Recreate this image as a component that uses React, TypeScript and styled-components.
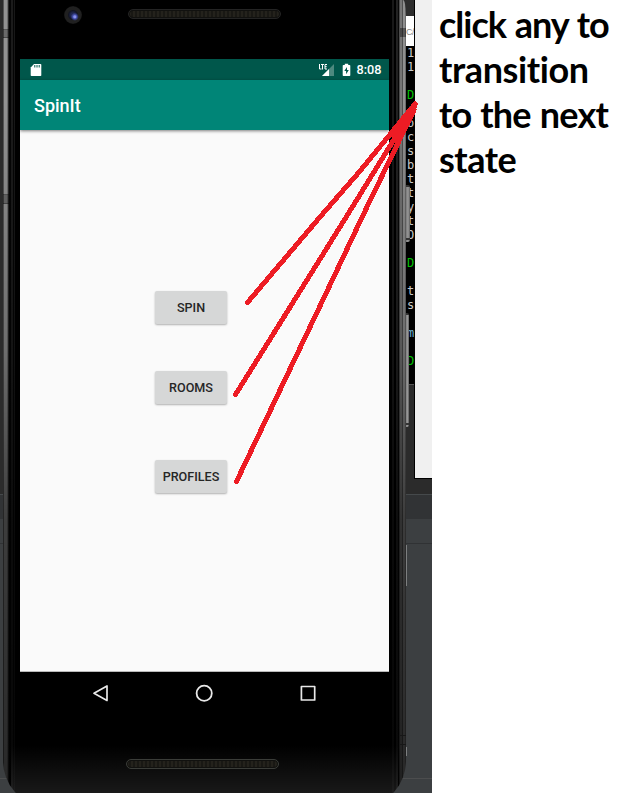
import React from "react";
import styled, { createGlobalStyle } from "styled-components";

const GlobalStyle = createGlobalStyle`
  * { box-sizing: border-box; }
  body { margin: 0; background: #fff; overflow: hidden; }
`;

const Page = styled.main`
  display: flex;
  position: relative;
  width: 624px;
  height: 793px;
  background: #fff;
  overflow: hidden;
`;

const Desktop = styled.section`
  position: relative;
  width: 432px;
  height: 793px;
  flex: none;
  overflow: hidden;
  background: linear-gradient(
    #2b2b2b 0 494px, #45494b 494px 495px, #313335 495px 519px, #3c3f41 519px 543px,
    #303234 543px 544px, #3c3f41 544px 778px, #4c4d4e 778px 779px, #3c3f41 779px
  );
`;

const Console = styled.div`
  position: absolute;
  left: 400px;
  top: 0;
  width: 15px;
  height: 479px;
  overflow: hidden;
  border-right: 1px solid #000;
  background: linear-gradient(#2d2d2d 0 16px, #fff 16px 46px, #000 46px 384px, #555 384px 385px, #2b2b2b 385px);
`;

const CodeLine = styled.div<{ $color?: string }>`
  height: 14px;
  padding-left: 7px;
  font: 12px/15px "DejaVu Sans Mono", monospace;
  color: ${(p) => p.$color ?? "#c8c8c8"};
  white-space: pre;
`;

const CodeTab = styled.div`
  height: 46px;
  padding: 25px 0 0 6px;
  font: 9px/14px "Liberation Sans", sans-serif;
  letter-spacing: -0.6px;
  color: #888;
`;

const SidePanel = styled.div`
  position: absolute;
  left: 415px;
  top: 0;
  width: 17px;
  height: 479px;
  background: #f0f0f0;
  border-bottom: 1px solid #000;
`;

const EdgeMark = styled.div<{ $top: number; $height: number }>`
  position: absolute;
  left: 406px;
  top: ${(p) => p.$top}px;
  width: 1px;
  height: ${(p) => p.$height}px;
  background: #7d7f80;
`;

const SideKey = styled.div<{ $top: number; $height: number; $width: number }>`
  position: absolute;
  left: 405px;
  top: ${(p) => p.$top}px;
  width: ${(p) => p.$width}px;
  height: ${(p) => p.$height}px;
  border-radius: 0 2px 2px 0;
  background: linear-gradient(#333 0 2px, transparent 2px calc(100% - 4px), #333 calc(100% - 4px) calc(100% - 2px), transparent calc(100% - 2px)),
    linear-gradient(90deg, #666, #9a9a9a 60%, #5c5c5c);
`;

const Phone = styled.div`
  position: relative;
  display: flex;
  flex-direction: column;
  width: 403px;
  height: 805px;
  margin-left: 3px;
  padding: 0 17px;
  overflow: hidden;
  border-radius: 0 3px 40px 40px / 0 15px 45px 45px;
  background:
    linear-gradient(transparent 0 29px, rgba(0,0,0,.4) 29px 30px, rgba(0,0,0,.28) 30px 37px, rgba(0,0,0,.5) 37px 38px, transparent 38px 194px, rgba(0,0,0,.4) 194px 195px, rgba(0,0,0,.28) 195px 203px, rgba(0,0,0,.5) 203px 204px, transparent 204px) 0 0 / 6px 100% no-repeat,
    linear-gradient(transparent 0 28px, rgba(0,0,0,.4) 28px 37px, transparent 37px 735px, #171717 735px 736px, transparent 736px 744px, #171717 744px 745px, transparent 745px) 397px 0 / 6px 100% no-repeat,
    linear-gradient(transparent 745px, rgba(255,255,255,.12)) 8px 0 / 387px 100% no-repeat,
    linear-gradient(transparent 0 100px, rgba(0,0,0,.25) 350px, rgba(0,0,0,.58) 520px, rgba(0,0,0,.72) 780px),
    linear-gradient(90deg,
      #555 0 1px, #929292 1px 4px, #707070 4px 5px, #262626 5px 6px, #050505 6px 8px,
      #1b1b1b 8px 10px, #050505 10px 11px, #171717 11px 12px, #000 12px 389px,
      #181818 389px 391px, #000 391px 393px, #222 393px 395px, #080808 395px 396px,
      #4c4c4c 396px 397px, #757575 397px 399px, #505050 399px 400px, #8f8f8f 400px 402px, #6b6b6b 402px 403px);
`;

const Bezel = styled.div`
  display: flex;
  height: 59px;
  flex: none;
  padding: 6px 0 0 44px;
`;

const Camera = styled.div`
  width: 18px;
  height: 18px;
  border-radius: 50%;
  background: radial-gradient(circle at 60% 60%, #8992ec 0 1px, #4651b0 2px, rgba(32, 39, 80, 0) 4px),
    radial-gradient(circle, #202750 0 2px, #121522 4.5px, #202020 5.5px 8px, #151515 9px);
`;

const Grille = styled.div<{ $lower?: boolean }>`
  width: 153px;
  height: 10px;
  margin: ${(p) => (p.$lower ? "44px 0 0 106px" : "3px 0 0 46px")};
  border: 1px solid ${(p) => (p.$lower ? "#3b3d39" : "#242424")};
  border-radius: 5px;
  background: repeating-linear-gradient(90deg, #24221c 0 2px, #191814 2px 4px);
  box-shadow: inset 0 0 0 1px #11110f;
`;

const Screen = styled.div`
  display: flex;
  flex-direction: column;
  width: 369px;
  height: 613px;
  flex: none;
  background: #fafafa;
  border-bottom: 1px solid #b9b9b9;
  font-family: Roboto, sans-serif;
`;

const StatusBar = styled.div`
  display: flex;
  align-items: center;
  height: 21px;
  flex: none;
  padding: 0 7px 0 10px;
  background: #00574b;
  color: #fff;
`;

const StatusIcon = styled.svg<{ $gap?: number }>`
  display: block;
  flex: none;
  margin-right: ${(p) => p.$gap ?? 0}px;
`;

const StatusSpace = styled.div`
  flex: 1;
`;

const Clock = styled.span`
  width: 25.5px;
  font-size: 12.7px;
  font-weight: 500;
  line-height: 22px;
  white-space: nowrap;
`;

const AppBar = styled.header`
  height: 50px;
  flex: none;
  padding-left: 14px;
  background: #008577;
  box-shadow: 0 1px 3px rgba(0, 0, 0, 0.5);
  color: #fff;
  font-size: 18px;
  font-weight: 500;
  line-height: 52px;
`;

const Choices = styled.div`
  display: flex;
  flex-direction: column;
  padding: 161px 0 0 135px;
`;

const Choice = styled.button<{ $gap: number }>`
  width: 72px;
  height: 33px;
  margin: 0 0 ${(p) => p.$gap}px;
  padding: 0;
  border: 0;
  border-radius: 2px;
  background: #d6d7d7;
  box-shadow: 0 1px 2px rgba(0, 0, 0, 0.3);
  color: #262626;
  font: 500 12.6px/34px Roboto, sans-serif;
`;

const NavBar = styled.nav`
  display: flex;
  justify-content: space-between;
  width: 225px;
  height: 43px;
  margin-left: 72px;
  padding-top: 12px;
`;

const Note = styled.p`
  margin: 0;
  padding: 2px 0 0 7px;
  font: 700 36px/45px Lato, sans-serif;
  font-variant-ligatures: none;
  color: #000;
`;

const NoteLine = styled.span<{ $spacing: number }>`
  display: block;
  letter-spacing: ${(p) => p.$spacing}px;
  word-spacing: 1px;
  white-space: nowrap;
`;

const Strokes = styled.svg`
  position: absolute;
  left: 0;
  top: 0;
  pointer-events: none;
`;

const GREEN = "#00c000";

const code: [string, string?][] = [
  ["1"], ["1"], [""], ["D", GREEN], [":"], ["o"], ["c"], ["s"], ["b"], ["t"], ["t"], ["y"],
  ["t"], ["O"], [""], ["D", GREEN], [""], ["t"], ["s"], [""], ["m", "#6fb3d2"], [""], ["D", GREEN],
];

const note: [string, number][] = [
  ["click any to", -1],
  ["transition", -0.4],
  ["to the next", -0.8],
  ["state", -0.5],
];

export default function App() {
  return (
    <Page>
      <GlobalStyle />
      <Desktop>
        <Console>
          <CodeTab>C/</CodeTab>
          {code.map(([text, color], i) => (
            <CodeLine key={i} $color={color}>{text}</CodeLine>
          ))}
        </Console>
        <SidePanel />
        <EdgeMark $top={545} $height={41} />
        <EdgeMark $top={747} $height={9} />
        <SideKey $top={185} $height={57} $width={5} />
        <SideKey $top={313} $height={114} $width={4} />
        <Phone>
          <Bezel>
            <Camera />
            <Grille />
          </Bezel>
          <Screen>
            <StatusBar>
              <StatusIcon width="12" height="14" viewBox="0 0 12 14">
                <path d="M4 1h6.500q.8 0 .8.8v10.400q0 .8-.8.8h-9q-.8 0-.8-.8V4.500z" fill="#fff" />
                <path d="M4.800 2v2.500M7 2v2.500M9.200 2v2.500" stroke="#00574b" strokeWidth="1" />
              </StatusIcon>
              <StatusSpace />
              <StatusIcon width="17" height="14" viewBox="0 0 17 14" $gap={7}>
                <path d="M16 1v12H4z" fill="#4d897f" />
                <path d="M11 6v7H4z" fill="#fff" />
                <path d="M1.500 1v5h2M3 1.500h3M4.500 1.500v5M9 1.500H7v4.500h2M7 3.700h1.700" fill="none" stroke="#fff" strokeWidth="1" />
              </StatusIcon>
              <StatusIcon width="9" height="14" viewBox="0 0 9 14" $gap={6}>
                <path d="M2.800.7h3.400V2h1.300q.8 0 .8.8v9.400q0 .8-.8.8h-6q-.8 0-.8-.8V2.800q0-.8.8-.8h1.300z" fill="#fff" />
                <path d="M5 4 2.300 8h1.800v3.200L6.800 7H5z" fill="#00574b" />
              </StatusIcon>
              <Clock>8:08</Clock>
            </StatusBar>
            <AppBar>SpinIt</AppBar>
            <Choices>
              <Choice $gap={47}>SPIN</Choice>
              <Choice $gap={56}>ROOMS</Choice>
              <Choice $gap={0}>PROFILES</Choice>
            </Choices>
          </Screen>
          <NavBar>
            <svg width="18" height="18" viewBox="0 0 18 18" fill="none" stroke="#e8e8e8" strokeWidth="1.7" strokeLinejoin="round">
              <path d="M15 2v14.500L2 9.300z" />
            </svg>
            <svg width="20" height="20" viewBox="0 0 20 20" fill="none" stroke="#e8e8e8" strokeWidth="1.8">
              <circle cx="9.2" cy="9.2" r="7.6" />
            </svg>
            <svg width="18" height="18" viewBox="0 0 18 18" fill="none" stroke="#e8e8e8" strokeWidth="1.7" strokeLinejoin="round">
              <rect x="2.4" y="2.5" width="13.3" height="13.5" />
            </svg>
          </NavBar>
          <Grille $lower />
        </Phone>
      </Desktop>
      <Note>
        {note.map(([text, spacing]) => (
          <NoteLine key={text} $spacing={spacing}>{text}</NoteLine>
        ))}
      </Note>
      <Strokes width="624" height="793" fill="none" stroke="#ed1c24" strokeWidth="5" strokeLinecap="round" strokeLinejoin="round" shapeRendering="crispEdges">
        <path d="M247.500 302.500L320 217L360 171L415 104" />
        <path d="M235.500 394.500L307 280L353 206L414 107" />
        <path d="M236.500 481.500L320 306L366 209L414 110" />
        <path d="M413 109L394 136L405 121L398 143" />
      </Strokes>
    </Page>
  );
}
